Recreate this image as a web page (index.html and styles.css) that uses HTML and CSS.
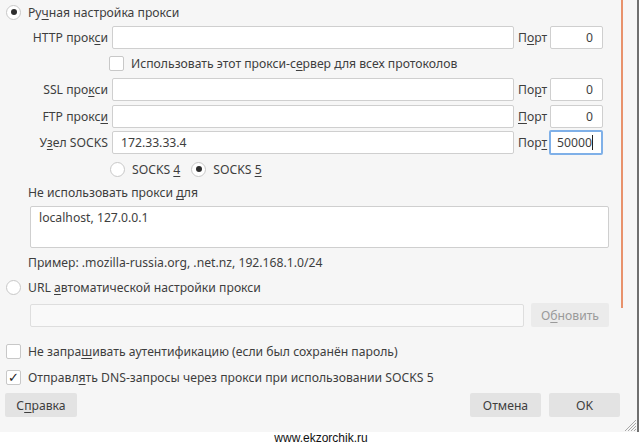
FILE: index.html
```html
<!DOCTYPE html>
<html lang="ru">
<head>
<meta charset="utf-8">
<link rel="stylesheet" href="styles.css">
</head>
<body>
<div class="dialog">
  <div class="radio-row top">
    <span class="radio on"></span>
    <span>Ру<u>ч</u>ная настройка прокси</span>
  </div>

  <div class="proxy-grid">
    <label class="lbl">HTTP прок<u>с</u>и</label>
    <div class="input"></div>
    <label class="plbl">П<u>о</u>рт</label>
    <div class="input port">0</div>

    <div class="check-cell">
      <span class="check"></span>
      <span>Использовать этот прокси-с<u>е</u>рвер для всех протоколов</span>
    </div>

    <label class="lbl">SSL про<u>к</u>си</label>
    <div class="input"></div>
    <label class="plbl">По<u>р</u>т</label>
    <div class="input port">0</div>

    <label class="lbl">FTP прокс<u>и</u></label>
    <div class="input"></div>
    <label class="plbl"><u>П</u>орт</label>
    <div class="input port">0</div>

    <label class="lbl">У<u>з</u>ел SOCKS</label>
    <div class="input text">172.33.33.4</div>
    <label class="plbl">Пор<u>т</u></label>
    <div class="input port focus">50000<span class="caret"></span></div>
  </div>

  <div class="socks-row">
    <span class="radio"></span><span class="rtxt">SOCKS <u>4</u></span>
    <span class="radio on"></span><span class="rtxt">SOCKS <u>5</u></span>
  </div>

  <div class="noproxy-label">Не использовать прокси <u>д</u>ля</div>
  <div class="textarea">localhost, 127.0.0.1</div>
  <div class="example">Пример: .mozilla-russia.org, .net.nz, 192.168.1.0/24</div>

  <div class="radio-row url">
    <span class="radio"></span>
    <span>URL <u>а</u>втоматической настройки прокси</span>
  </div>
  <div class="url-row">
    <div class="input disabled"></div>
    <div class="btn disabled-btn">О<u>б</u>новить</div>
  </div>

  <div class="check-row first">
    <span class="check"></span>
    <span>Не запра<u>ш</u>ивать аутентификацию (если был сохранён пароль)</span>
  </div>
  <div class="check-row second">
    <span class="check checked">✓</span>
    <span>Отправл<u>я</u>ть DNS-запросы через прокси при использовании SOCKS 5</span>
  </div>

  <div class="buttons">
    <div class="btn help">С<u>п</u>равка</div>
    <div class="spacer"></div>
    <div class="btn">Отмена</div>
    <div class="btn">OK</div>
  </div>

  <div class="scroll-mark"></div>
  <svg class="grip" width="12" height="12" viewBox="0 0 12 12">
    <path d="M11 3 L3 11 M11 6 L6 11 M11 9 L9 11 M11 0 L0 11" stroke="#a8a8a8" stroke-width="1"/>
  </svg>
</div>
<div class="footer">www.ekzorchik.ru</div>
</body>
</html>
```

FILE: styles.css
```css
html, body {
  margin: 0;
  padding: 0;
  background: #ffffff;
}
body {
  width: 642px;
  height: 446px;
  overflow: hidden;
  font-family: "Noto Sans", "Open Sans", sans-serif;
  font-size: 12.2px;
  color: #3e3e3e;
}
u {
  text-decoration: underline;
  text-underline-offset: 2px;
}
.dialog {
  position: relative;
  width: 639px;
  height: 432px;
  box-sizing: border-box;
  background: #f6f6f6;
  border-right: 2px solid #707070;
  display: flex;
  flex-direction: column;
}
.radio {
  width: 15px;
  height: 15px;
  border: 1px solid #c8c8c8;
  border-radius: 50%;
  background: #ffffff;
  box-sizing: border-box;
  position: relative;
  flex: none;
}
.radio.on::after {
  content: "";
  position: absolute;
  left: 3.5px;
  top: 3.5px;
  width: 6px;
  height: 6px;
  border-radius: 50%;
  background: #2e2e2e;
}
.radio-row {
  display: flex;
  align-items: center;
  gap: 7px;
  padding-left: 6px;
  height: 16px;
}
.radio-row.top {
  margin-top: 4px;
}
.proxy-grid {
  display: grid;
  grid-template-columns: 108px 402px 28px 53px;
  grid-template-rows: 23px 22px 23px 23px 23px;
  column-gap: 4px;
  row-gap: 3.5px;
  margin-top: 6px;
  align-items: center;
}
.lbl {
  text-align: right;
  white-space: nowrap;
}
.plbl {
  white-space: nowrap;
}
.input {
  height: 23px;
  box-sizing: border-box;
  background: #ffffff;
  border: 1px solid #cfcfcf;
  border-radius: 2px;
  display: flex;
  align-items: center;
}
.input.text {
  padding-left: 8px;
}
.input.port {
  justify-content: flex-end;
  padding-right: 9px;
}
.input.focus {
  border: 2px solid #7fb0e8;
  justify-content: flex-start;
  padding-left: 6px;
  height: 25px;
  margin-left: -1px;
}
.caret {
  width: 1px;
  height: 15px;
  background: #222;
}
.check-cell {
  grid-column: 2 / 5;
  display: flex;
  align-items: center;
  gap: 7px;
  height: 22px;
  margin-left: -3px;
}
.check {
  width: 15px;
  height: 15px;
  box-sizing: border-box;
  border: 1px solid #c8c8c8;
  border-radius: 2px;
  background: #ffffff;
  flex: none;
  display: flex;
  align-items: center;
  justify-content: center;
  font-size: 12px;
  line-height: 1;
  color: #222;
}
.socks-row {
  display: flex;
  align-items: center;
  margin-top: 7px;
  padding-left: 110px;
  height: 16px;
}
.socks-row .rtxt {
  margin-left: 7px;
  margin-right: 11px;
}
.noproxy-label {
  margin-top: 7px;
  padding-left: 28px;
  height: 18px;
  line-height: 18px;
}
.textarea {
  margin-top: 4px;
  margin-left: 30px;
  width: 579px;
  height: 42px;
  box-sizing: border-box;
  background: #ffffff;
  border: 1px solid #cfcfcf;
  border-radius: 2px;
  padding: 2px 8px;
}
.example {
  margin-top: 6px;
  padding-left: 28px;
  height: 18px;
  line-height: 18px;
}
.radio-row.url {
  margin-top: 7px;
}
.url-row {
  display: flex;
  align-items: center;
  gap: 7px;
  margin-top: 8px;
  padding-left: 30px;
}
.input.disabled {
  width: 494px;
  background: #f9f9f9;
  border-color: #dedede;
}
.btn {
  height: 24px;
  box-sizing: border-box;
  background: #e3e3e3;
  border-radius: 2px;
  display: flex;
  align-items: center;
  justify-content: center;
  width: 71px;
  flex: none;
}
.btn.disabled-btn {
  width: 78px;
  background: #ebebeb;
  color: #9a9a9a;
}
.check-row {
  display: flex;
  align-items: center;
  gap: 7px;
  padding-left: 6px;
  height: 18px;
}
.check-row.first {
  margin-top: 15px;
}
.check-row.second {
  margin-top: 8.5px;
}
.check.checked {
  font-size: 13px;
}
.buttons {
  display: flex;
  align-items: center;
  gap: 8px;
  margin-top: 6.5px;
  padding-left: 5px;
  width: 620px;
  box-sizing: border-box;
}
.btn.help {
  width: 72px;
}
.spacer {
  flex: 1;
}
.scroll-mark {
  position: absolute;
  left: 621px;
  top: 0;
  width: 2px;
  height: 308px;
  background: #e8926c;
}
.grip {
  position: absolute;
  right: 0;
  bottom: 0;
}
.footer {
  font-family: "Liberation Sans", Arial, sans-serif;
  font-size: 12px;
  color: #111;
  text-align: center;
  width: 642px;
  height: 14px;
  line-height: 12px;
}
```
